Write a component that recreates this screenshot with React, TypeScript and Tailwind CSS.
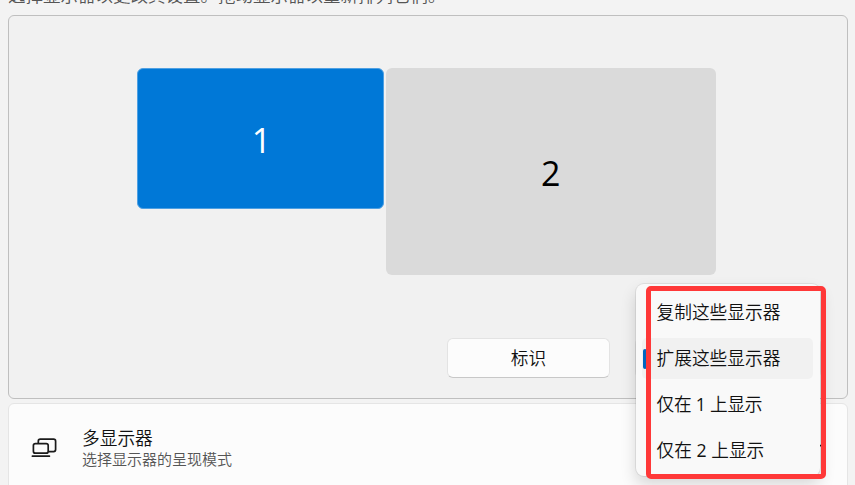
import { useState } from 'react'
import clsx from 'clsx'

const modes = ['复制这些显示器', '扩展这些显示器', '仅在 1 上显示', '仅在 2 上显示']

function DisplaysIcon() {
  return (
    <svg className="w-[26px] h-5 shrink-0" viewBox="0 0 26 20" fill="none" stroke="#1b1b1b" strokeWidth="1.7">
      <path d="M7.3 5V3.2a2 2 0 0 1 2-2h13.3a2 2 0 0 1 2 2v8.4a2 2 0 0 1-2 2h-5" />
      <rect x="2.4" y="5.6" width="14.8" height="9.6" rx="2" />
      <path d="M1.4 18.2h17" strokeLinecap="round" />
    </svg>
  )
}

function ModeMenu() {
  const [selected, setSelected] = useState(1)

  return (
    <div
      className="absolute left-[636px] top-[284px] z-10 w-[184px] h-[192px] pt-2 pl-1.5 pr-[7px] rounded-lg bg-[#f9f9f9] shadow-[0_0_0_1px_rgba(0,0,0,0.07),0_8px_16px_rgba(0,0,0,0.16)]"
      role="listbox"
    >
      {modes.map((mode, idx) => (
        <button
          key={mode}
          role="option"
          aria-selected={idx === selected}
          onClick={() => setSelected(idx)}
          className={clsx(
            'relative flex items-center w-full h-[41px] mb-[5px] pl-[14.5px] rounded-[5px] text-[17.7px] whitespace-nowrap',
            idx === 2 && 'tracking-[-0.25px]',
            idx === selected && 'bg-[#f1f1f1]'
          )}
        >
          {idx === selected && <span className="absolute left-[1px] top-[11px] w-1 h-5 rounded-[2px] bg-[#0067c0]" />}
          <span>
            {mode.split(/(\d)/).map((part, i) => (
              <span key={i} className={clsx(/\d/.test(part) && 'font-normal')}>{part}</span>
            ))}
          </span>
        </button>
      ))}
    </div>
  )
}

export default function App() {
  return (
    <div className="relative w-[855px] h-[485px] overflow-hidden bg-[#f3f3f3] text-[#111] font-[350] font-['Open_Sans','Noto_Sans_CJK_SC',sans-serif]">
      <div className="flex items-end h-[15px] pl-2">
        <p className="mb-2 text-[17.5px] leading-6 whitespace-nowrap text-[#555]">
          选择显示器以更改其设置。拖动显示器以重新排列它们。
        </p>
      </div>

      {/* Arrangement area */}
      <div className="flex flex-col mx-2 w-[840px] h-[384px] rounded-md border border-[#bfbfbf] bg-[#f1f1f1]">
        <div className="flex items-start gap-[2px] pl-32 pt-[52px]">
          <div className="flex items-center justify-center w-[247px] h-[141px] pt-[3px] pl-0.5 rounded-md border border-[#4fa0e2] bg-[#0078d7] text-white text-[34px] font-normal">
            <span className="leading-none">1</span>
          </div>
          <div className="flex items-center justify-center w-[329.5px] h-[207px] pt-[3px] rounded-md bg-[#dadada] text-black text-[34px] font-normal">
            <span className="leading-none">2</span>
          </div>
        </div>
        <div className="flex gap-[25px] mt-[63px] pl-[438px]">
          <button className="w-[163px] h-10 rounded-md border border-[#e3e3e3] border-b-[#c8c8c8] bg-[#fcfcfc] text-[17.7px]">
            标识
          </button>
          <button className="w-[186px] h-10 rounded-md border border-[#e3e3e3] border-b-[#c8c8c8] bg-[#fcfcfc]" aria-label="扩展这些显示器" />
        </div>
      </div>

      {/* Multiple displays */}
      <div className="flex items-center mx-2 mt-1 w-[840px] h-[90px] pl-[22px] rounded-md border border-[#e5e5e5] bg-[#fcfcfc]">
        <DisplaysIcon />
        <div className="flex flex-col ml-[25px] whitespace-nowrap">
          <span className="text-[17.7px] leading-[22px]">多显示器</span>
          <span className="text-[15px] leading-5 text-[#555]">选择显示器的呈现模式</span>
        </div>
        <svg className="w-[14px] h-2 ml-auto mr-[25px]" viewBox="0 0 14 8" fill="none" stroke="#1b1b1b" strokeWidth="1.3">
          <path d="m1 1 6 6 6-6" />
        </svg>
      </div>

      <ModeMenu />
      <div className="absolute left-[646px] top-[286px] z-20 w-[180px] h-[193px] rounded-[5px] border-[5px] border-[#ff3838] pointer-events-none" />
    </div>
  )
}
